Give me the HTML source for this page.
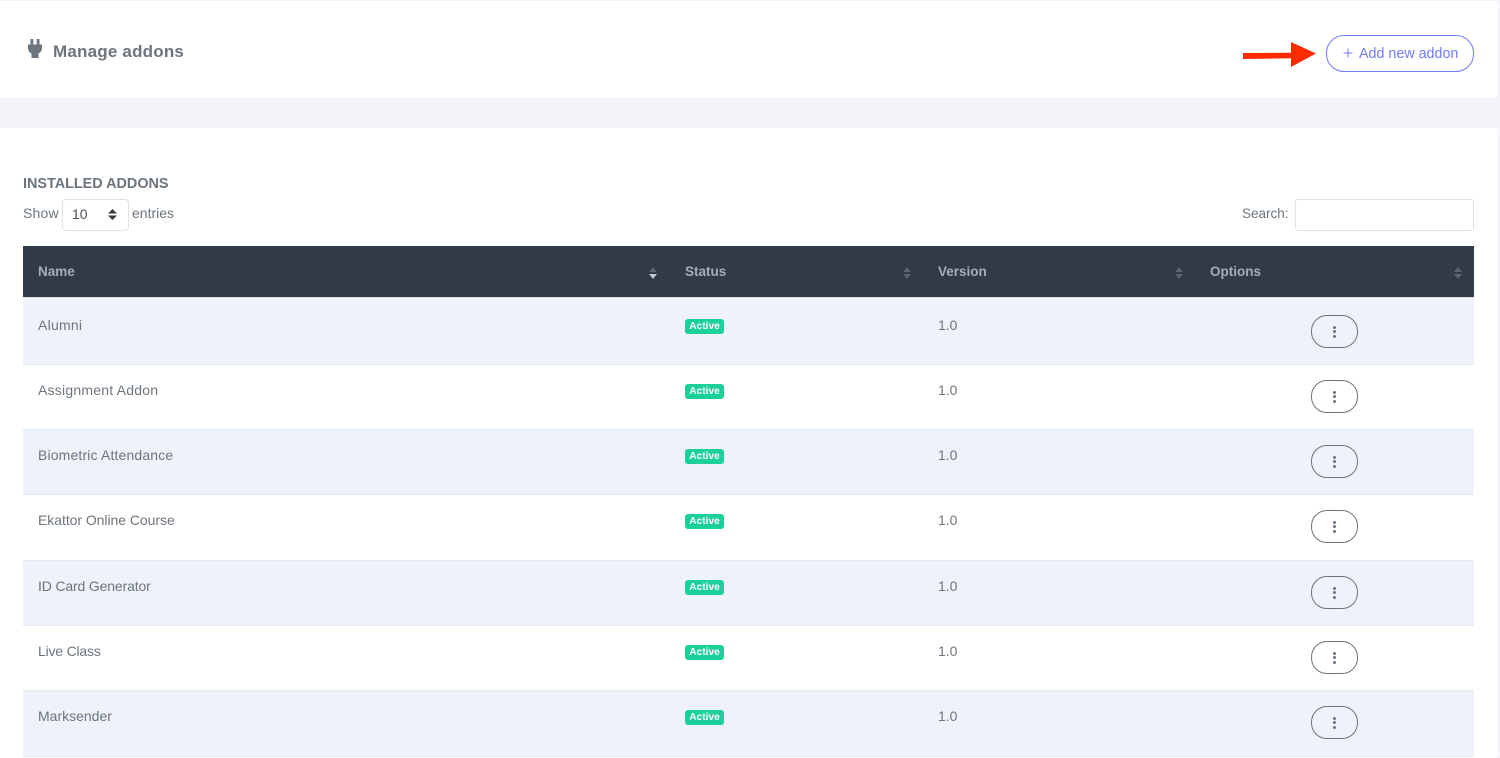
<!DOCTYPE html>
<html><head><meta charset="utf-8"><title>Manage addons</title>
<style>
html,body{margin:0;padding:0}
body{width:1500px;height:758px;overflow:hidden;background:#f3f4f9;position:relative;font-family:"Liberation Sans",sans-serif;color:#6c757d;font-size:14px}
.a{position:absolute;white-space:nowrap}
.card{position:absolute;left:0;width:1498px;background:#fff;border-radius:0 4px 4px 0}
.row{position:absolute;left:23px;width:1451px;border-bottom:1px solid #e3eaef}
.odd{background:#eef2fa}
.n{left:38px}.v{left:938px}
.t{line-height:16px}
.badge{position:absolute;left:685px;width:39px;height:15px;border-radius:3px;background:#1cd09a;color:#fff;font-weight:700;font-size:10.200px;line-height:16px;text-align:center}
.opt{position:absolute;left:1311px;width:45px;height:31px;border:1px solid #6c757d;border-radius:16px}
.opt i{position:absolute;left:21px;width:3px;height:3px;border-radius:50%;background:#6c757d}
.th{top:264px;font-size:13.500px;font-weight:700;color:#a9adb3;line-height:16px}
.s{position:absolute;top:267px;width:10px;height:12px}
</style></head><body>
<div class="card" style="top:1px;height:97px"></div>
<div class="card" style="top:128px;height:630px"></div>

<svg class="a" style="left:28px;top:39px" width="15" height="20" viewBox="0 0 15 20"><path fill="#6c757d" d="M2.500 0h2.800v5.500h3.400V0h2.800v5.500h2.500v3c0 3-1.500 5-3.500 6V19H3.500v-4.500C1.500 13.500 0 11.500 0 8.500v-3h2.500z"/></svg>
<div class="a" style="left:53px;top:42px;font-size:17px;font-weight:700;line-height:20px;letter-spacing:.2px">Manage addons</div>

<svg class="a" style="left:1240px;top:40px" width="80" height="30" viewBox="0 0 80 30"><path fill="#ff2a00" d="M3 13l48-.3V2L76 13.500 51 27v-8.700L3 19z"/></svg>
<div class="a" style="left:1326px;top:35px;width:146px;height:35px;border:1px solid #727cf5;border-radius:18px"></div>
<svg class="a" style="left:1343px;top:48px" width="10" height="10" viewBox="0 0 10 10"><path stroke="#727cf5" fill="none" d="M5 .5v9M.5 5h9"/></svg>
<div class="a" style="left:1359px;top:46px;font-size:14.300px;line-height:16px;color:#727cf5">Add new addon</div>

<div class="a" style="left:23px;top:176px;font-size:14.400px;font-weight:700;line-height:16px">INSTALLED ADDONS</div>
<div class="a t" style="left:23px;top:205px;letter-spacing:.2px">Show</div>
<div class="a" style="left:62px;top:199px;width:65px;height:30px;border:1px solid #dee2e6;border-radius:4px;background:#fff"></div>
<div class="a" style="left:72px;top:206px;font-size:14px;line-height:16px;color:#495057">10</div>
<svg class="a" style="left:108px;top:209px" width="9" height="11" viewBox="0 0 9 11"><path fill="#343a40" d="M4.500 0L9 4.500H0zM4.500 11L0 6.500h9z"/></svg>
<div class="a t" style="left:132px;top:205px">entries</div>
<div class="a t" style="left:1242px;top:206px;font-size:13.500px">Search:</div>
<div class="a" style="left:1295px;top:199px;width:177px;height:30px;border:1px solid #dee2e6;border-radius:3px;background:#fff"></div>

<div class="a" style="left:23px;top:246px;width:1451px;height:51px;background:#313a46"></div>
<div class="a" style="left:23px;top:297px;width:1451px;height:1px;background:#dfe5ee"></div>
<div class="a th n">Name</div><div class="a th" style="left:685px">Status</div><div class="a th" style="left:938px">Version</div><div class="a th" style="left:1210px">Options</div>
<svg class="s" style="left:648px" viewBox="0 0 10 12"><path fill="#5d646e" d="M5 0l4 5H1z"/><path fill="#c4c7cb" d="M5 12L1 7h8z"/></svg>
<svg class="s" style="left:902px" viewBox="0 0 10 12"><path fill="#5d646e" d="M5 0l4 5H1zM5 12L1 7h8z"/></svg>
<svg class="s" style="left:1174px" viewBox="0 0 10 12"><path fill="#5d646e" d="M5 0l4 5H1zM5 12L1 7h8z"/></svg>
<svg class="s" style="left:1453px" viewBox="0 0 10 12"><path fill="#5d646e" d="M5 0l4 5H1zM5 12L1 7h8z"/></svg>

<div class="row odd" style="top:298px;height:66px"></div>
<div class="row" style="top:365px;height:64px"></div>
<div class="row odd" style="top:430px;height:64px"></div>
<div class="row" style="top:495px;height:65px"></div>
<div class="row odd" style="top:561px;height:64px"></div>
<div class="row" style="top:626px;height:64px"></div>
<div class="row odd" style="top:691px;height:65px"></div>

<div class="a t n" style="top:317px;letter-spacing:.25px">Alumni</div><div class="badge" style="top:319px">Active</div><div class="a t v" style="top:317px">1.0</div><div class="opt" style="top:315px"><i style="top:10px"></i><i style="top:14px"></i><i style="top:18.500px"></i></div>
<div class="a t n" style="top:382px;letter-spacing:.22px">Assignment Addon</div><div class="badge" style="top:384px">Active</div><div class="a t v" style="top:382px">1.0</div><div class="opt" style="top:380px"><i style="top:10px"></i><i style="top:14px"></i><i style="top:18.500px"></i></div>
<div class="a t n" style="top:447px;letter-spacing:.15px">Biometric Attendance</div><div class="badge" style="top:449px">Active</div><div class="a t v" style="top:447px">1.0</div><div class="opt" style="top:445px"><i style="top:10px"></i><i style="top:14px"></i><i style="top:18.500px"></i></div>
<div class="a t n" style="top:512px;letter-spacing:-.05px">Ekattor Online Course</div><div class="badge" style="top:514px">Active</div><div class="a t v" style="top:512px">1.0</div><div class="opt" style="top:510px"><i style="top:10px"></i><i style="top:14px"></i><i style="top:18.500px"></i></div>
<div class="a t n" style="top:578px;letter-spacing:-.15px">ID Card Generator</div><div class="badge" style="top:580px">Active</div><div class="a t v" style="top:578px">1.0</div><div class="opt" style="top:576px"><i style="top:10px"></i><i style="top:14px"></i><i style="top:18.500px"></i></div>
<div class="a t n" style="top:643px;letter-spacing:-.2px">Live Class</div><div class="badge" style="top:645px">Active</div><div class="a t v" style="top:643px">1.0</div><div class="opt" style="top:641px"><i style="top:10px"></i><i style="top:14px"></i><i style="top:18.500px"></i></div>
<div class="a t n" style="top:708px">Marksender</div><div class="badge" style="top:710px">Active</div><div class="a t v" style="top:708px">1.0</div><div class="opt" style="top:706px"><i style="top:10px"></i><i style="top:14px"></i><i style="top:18.500px"></i></div>
</body></html>
